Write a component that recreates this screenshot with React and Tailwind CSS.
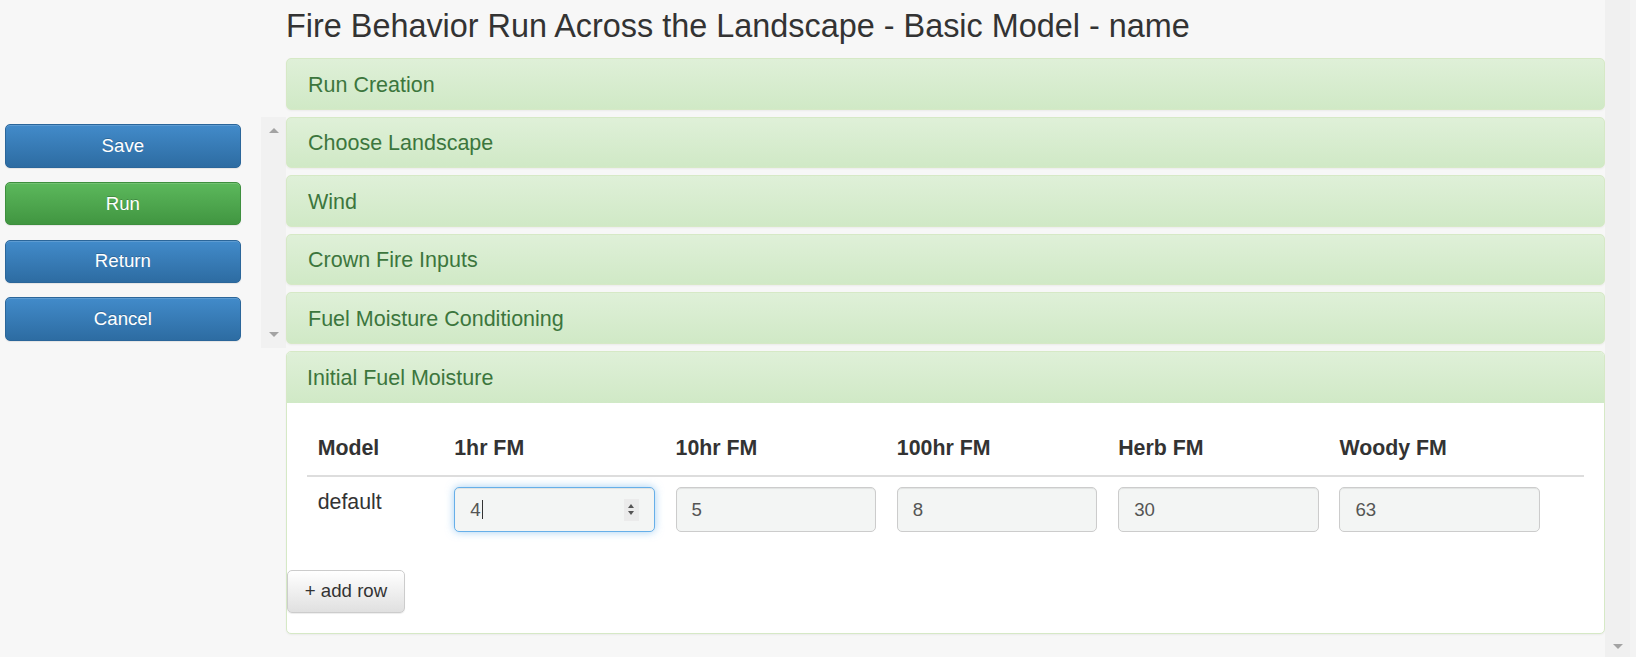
const navButtons = [
  { label: "Save", kind: "primary" },
  { label: "Run", kind: "success" },
  { label: "Return", kind: "primary" },
  { label: "Cancel", kind: "primary" },
];

const collapsedPanels = [
  "Run Creation",
  "Choose Landscape",
  "Wind",
  "Crown Fire Inputs",
  "Fuel Moisture Conditioning",
];

const columns = ["Model", "1hr FM", "10hr FM", "100hr FM", "Herb FM", "Woody FM"];
const rows = [{ model: "default", values: ["4", "5", "8", "30", "63"] }];

const gridCols =
  "grid grid-cols-[136.6px_221.3px_221.3px_221.3px_221.3px_1fr]";

function SideButton({ label, kind }) {
  const tone =
    kind === "success"
      ? "from-[#5cb85c] to-[#419641] border-[#3e8f3e]"
      : "from-[#428bca] to-[#2d6ca2] border-[#2b669a]";
  return (
    <button
      className={`h-[43.4px] w-[235.7px] rounded-[5px] border bg-gradient-to-b ${tone} text-white text-[18.67px] [text-shadow:0_-1px_0_rgba(0,0,0,0.2)] shadow-[inset_0_1px_0_rgba(255,255,255,0.15),0_1px_1px_rgba(0,0,0,0.075)]`}
    >
      {label}
    </button>
  );
}

function Arrow({ up }) {
  return up ? (
    <div className="w-0 h-0 border-l-[5.5px] border-r-[5.5px] border-b-[5px] border-l-transparent border-r-transparent border-b-[#a3a3a3]" />
  ) : (
    <div className="w-0 h-0 border-l-[5.5px] border-r-[5.5px] border-t-[5px] border-l-transparent border-r-transparent border-t-[#a3a3a3]" />
  );
}

function PanelHeading({ title }) {
  return (
    <div className="h-[51.5px] rounded-[5px] border border-[#d6e9c6] bg-gradient-to-b from-[#dff0d8] to-[#d0e9c6] shadow-[0_1px_2px_rgba(0,0,0,0.05)] flex items-center pt-[2px] px-[21px] text-[21.5px] text-[#3c763d]">
      {title}
    </div>
  );
}

function FmInput({ value, focused }) {
  if (focused) {
    return (
      <div className="h-[45px] w-[200.4px] rounded-[5px] border border-[#66afe9] bg-[#f3f5f4] shadow-[inset_0_1px_1px_rgba(0,0,0,0.075),0_0_8px_rgba(102,175,233,0.6)] flex items-center pl-[15px] pr-[15px] text-[18.67px] text-[#555]">
        <span>{value}</span>
        <span className="ml-[1px] h-[19px] w-px bg-[#333]" />
        <div className="ml-auto h-[22px] w-[15px] bg-[#ebebeb] flex flex-col items-center justify-center gap-[3px]">
          <div className="w-0 h-0 border-l-[3.5px] border-r-[3.5px] border-b-[4px] border-l-transparent border-r-transparent border-b-[#555]" />
          <div className="w-0 h-0 border-l-[3.5px] border-r-[3.5px] border-t-[4px] border-l-transparent border-r-transparent border-t-[#555]" />
        </div>
      </div>
    );
  }
  return (
    <div className="h-[45px] w-[200.4px] rounded-[5px] border border-[#ccc] bg-[#f3f5f4] shadow-[inset_0_1px_1px_rgba(0,0,0,0.075)] flex items-center pl-[15px] text-[18.67px] text-[#555]">
      {value}
    </div>
  );
}

export default function App() {
  return (
    <div className="h-[657px] overflow-hidden flex bg-[#f7f7f7] font-['Liberation_Sans',Arial,sans-serif]">
      {/* action buttons */}
      <aside className="w-[261px] shrink-0 pt-[124.3px] pl-[5px] flex flex-col gap-[14.3px]">
        {navButtons.map((b) => (
          <SideButton key={b.label} {...b} />
        ))}
      </aside>

      {/* left scroll track */}
      <div className="w-[25px] shrink-0 self-start mt-[116.7px] h-[231px] bg-[#f1f1f1] flex flex-col items-center justify-between pt-[11px] pb-[11px]">
        <Arrow up />
        <Arrow />
      </div>

      <main className="w-[1319px] shrink-0 pt-[8.6px]">
        <h1 className="text-[32.4px] leading-[35.2px] text-[#333] mb-[14.5px]">
          Fire Behavior Run Across the Landscape - Basic Model - name
        </h1>

        <div className="flex flex-col gap-[7px]">
          {collapsedPanels.map((p) => (
            <PanelHeading key={p} title={p} />
          ))}

          <div className="rounded-[5px] border border-[#d6e9c6] bg-white overflow-hidden shadow-[0_1px_2px_rgba(0,0,0,0.05)]">
            <div className="h-[51px] flex items-center pt-[2px] px-[20px] bg-gradient-to-b from-[#dff0d8] to-[#d0e9c6] text-[21.5px] text-[#3c763d]">
              Initial Fuel Moisture
            </div>
            <div className="p-[20px]">
              <div className={`${gridCols} border-b-2 border-[#ddd]`}>
                {columns.map((c) => (
                  <div
                    key={c}
                    className="p-[10.67px] leading-[30.5px] text-[21.33px] font-bold text-[#333]"
                  >
                    {c}
                  </div>
                ))}
              </div>
              {rows.map((r) => (
                <div key={r.model} className={gridCols}>
                  <div className="p-[10.67px] leading-[30.5px] text-[21.33px] text-[#333]">
                    {r.model}
                  </div>
                  {r.values.map((v, i) => (
                    <div key={i} className="p-[10.67px]">
                      <FmInput value={v} focused={i === 0} />
                    </div>
                  ))}
                </div>
              ))}
              <button className="mt-[26.7px] ml-[-20px] h-[43.4px] w-[118px] rounded-[5px] border border-[#ccc] bg-gradient-to-b from-white to-[#e0e0e0] text-[18.67px] text-[#333] shadow-[inset_0_1px_0_rgba(255,255,255,0.15),0_1px_1px_rgba(0,0,0,0.075)]">
                + add row
              </button>
            </div>
          </div>
        </div>
      </main>

      {/* page scroll track */}
      <div className="w-[25px] shrink-0 bg-[#f0f0f0] flex flex-col justify-end items-center pb-[8px]">
        <Arrow />
      </div>
      <div className="w-[6px] shrink-0 bg-[#f3f3f3]" />
    </div>
  );
}
